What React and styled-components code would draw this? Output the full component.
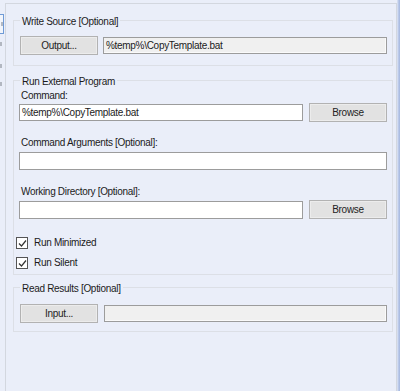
import React from 'react';
import styled, { createGlobalStyle } from 'styled-components';

const GlobalStyle = createGlobalStyle`
  html, body {
    margin: 0;
    padding: 0;
    background: #eaeef9;
  }
`;

export default function App() {
  return (
    <Page>
      <GlobalStyle />
      <TabStrip>
        <TabActive><TabMark /></TabActive>
        <TabMark $top={8} />
        <TabMark $top={18} />
        <TabMark $top={14} />
      </TabStrip>
      <Panel>
        <Group $bottom={10}>
          <Legend>Write Source [Optional]</Legend>
          <Body>
            <Row $top={9}>
              <Button>Output...</Button>
              <Field $readOnly>%temp%\CopyTemplate.bat</Field>
            </Row>
          </Body>
        </Group>

        <Group $mt={7} $bottom={4}>
          <Legend>Run External Program</Legend>
          <Body>
            <Label $top={2}>Command:</Label>
            <Row $top={0}>
              <Field>%temp%\CopyTemplate.bat</Field>
              <Button>Browse</Button>
            </Row>
            <Label $top={14}>Command Arguments [Optional]:</Label>
            <Field $top={2} $h={18} $block />
            <Label $top={15}>Working Directory [Optional]:</Label>
            <Row $top={1}>
              <Field $h={18} />
              <Button>Browse</Button>
            </Row>
            <Check $top={17} label="Run Minimized" />
            <Check $top={6} label="Run Silent" />
          </Body>
        </Group>

        <Group $mt={5} $bottom={8}>
          <Legend>Read Results [Optional]</Legend>
          <Body>
            <Row $top={10}>
              <Button>Input...</Button>
              <Field $readOnly $gap={1} />
            </Row>
          </Body>
        </Group>
      </Panel>
      <Edge />
    </Page>
  );
}

function Check({ label, $top }) {
  return (
    <CheckRow $top={$top}>
      <Box>
        <svg width="9" height="9" viewBox="0 0 9 9">
          <path d="M1 4.5 L3.5 7 L8 1.5" fill="none" stroke="#333" strokeWidth="1.2" />
        </svg>
      </Box>
      <CheckText>{label}</CheckText>
    </CheckRow>
  );
}

const Page = styled.div`
  display: flex;
  width: 400px;
  height: 391px;
  overflow: hidden;
  background: #eaeef9;
  font-family: "Liberation Sans", Arial, sans-serif;
  font-size: 10px;
  letter-spacing: -0.3px;
  color: #1b1b1b;
`;

const TabStrip = styled.div`
  width: 5px;
  display: flex;
  flex-direction: column;
  padding-top: 14px;
`;

const TabActive = styled.div`
  width: 3px;
  height: 18px;
  border: 1px solid #6f9ad6;
  border-left: none;
  background: #f2f5fb;
  display: flex;
  align-items: center;
  justify-content: center;
`;

const TabMark = styled.div`
  width: 2px;
  height: 4px;
  margin-top: ${p => p.$top || 0}px;
  background: #9aa0aa;
  opacity: 0.7;
`;

const Panel = styled.div`
  flex: 1;
  margin-top: 3px;
  border-top: 1px solid #d3d7df;
  border-left: 1px solid #d3d7df;
  border-right: 1px solid #d3d7df;
  padding: 9px 3px 0 7px;
  display: flex;
  flex-direction: column;
`;

const Edge = styled.div`
  width: 3px;
  background: linear-gradient(to right, #dfe6f5, #b3c3e6 60%, #a6b8e0);
`;

const Group = styled.fieldset`
  flex: none;
  margin: ${p => p.$mt || 0}px 0 0 0;
  padding: 0 5px ${p => p.$bottom}px 5px;
  border: 1px solid #dcdfe6;
  min-inline-size: 0;
`;

const Legend = styled.legend`
  padding: 4px 2px 0;
  margin-left: 1px;
  line-height: 10px;
  font-size: 10px;
  color: #1b1b1b;
`;

const Body = styled.div`
  display: flex;
  flex-direction: column;
`;

const Row = styled.div`
  display: flex;
  align-items: center;
  gap: 5px;
  height: 19px;
  margin-top: ${p => p.$top || 0}px;
`;

const Label = styled.div`
  line-height: 14px;
  margin-top: ${p => p.$top || 0}px;
  padding-left: 2px;
`;

const Button = styled.div`
  flex: none;
  width: 78px;
  height: 19px;
  box-sizing: border-box;
  margin-left: 1px;
  background: #e2e2e2;
  border: 1px solid #b2b2b2;
  box-shadow: inset 0 0 0 1px #ececec;
  display: flex;
  align-items: center;
  justify-content: center;
  color: #222;
`;

const Field = styled.div`
  flex: ${p => (p.$block ? 'none' : '1')};
  height: ${p => p.$h || 17}px;
  box-sizing: border-box;
  margin-top: ${p => p.$top || 0}px;
  margin-left: ${p => p.$gap || 0}px;
  background: ${p => (p.$readOnly ? '#f0f0f0' : '#ffffff')};
  border: 1px solid #9c9c9c;
  box-shadow: ${p => (p.$readOnly ? 'inset -1px -1px 0 #fafafa' : 'none')};
  padding-left: 2px;
  display: flex;
  align-items: center;
  white-space: nowrap;
  overflow: hidden;
`;

const CheckRow = styled.div`
  display: flex;
  align-items: center;
  gap: 6px;
  height: 14px;
  margin-top: ${p => p.$top || 0}px;
  margin-left: -3px;
`;

const Box = styled.div`
  width: 12px;
  height: 12px;
  box-sizing: border-box;
  border: 1px solid #555;
  background: #fff;
  display: flex;
  align-items: center;
  justify-content: center;
`;

const CheckText = styled.span`
  line-height: 14px;
`;
